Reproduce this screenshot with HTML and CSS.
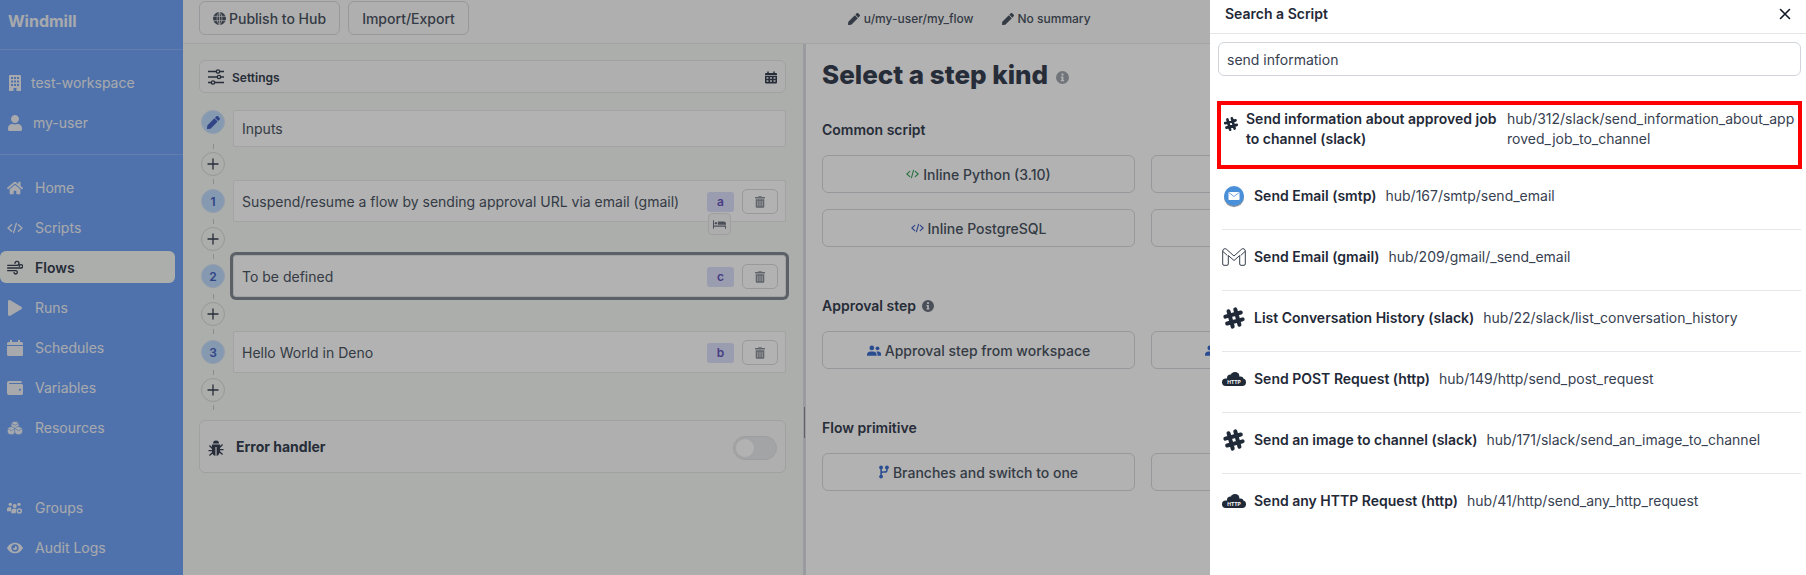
FILE: index.html
```html
<!DOCTYPE html>
<html lang="en">
<head>
    <meta charset="UTF-8">
    <meta name="viewport" content="width=device-width, initial-scale=1.0">
    <title>Windmill</title>
    <link rel="stylesheet" href="styles.css">
</head>
<body>
    <svg class="defs" width="0" height="0">
        <symbol id="i-pen" viewBox="0 0 512 512"><path d="M290.74 93.24l128.02 128.02-277.99 277.99-114.14 12.6C11.35 513.54-1.56 500.62.14 485.34l12.7-114.22 277.9-277.88zm207.2-19.06l-60.11-60.11c-18.75-18.75-49.16-18.75-67.91 0l-56.55 56.55 128.02 128.02 56.55-56.55c18.75-18.76 18.75-49.16 0-67.91z"/></symbol>
        <symbol id="i-user" viewBox="0 0 448 512"><path d="M224 256c70.7 0 128-57.3 128-128S294.7 0 224 0 96 57.3 96 128s57.3 128 128 128zm89.6 32h-16.7c-22.2 10.2-46.9 16-72.9 16s-50.6-5.8-72.9-16h-16.7C60.2 288 0 348.2 0 422.4V464c0 26.5 21.5 48 48 48h352c26.5 0 48-21.5 48-48v-41.6c0-74.2-60.2-134.4-134.4-134.4z"/></symbol>
        <symbol id="i-home" viewBox="0 0 576 512"><path d="M280.37 148.26L96 300.11V464a16 16 0 0 0 16 16l112.06-.29a16 16 0 0 0 15.92-16V368a16 16 0 0 1 16-16h64a16 16 0 0 1 16 16v95.64a16 16 0 0 0 16 16.05L464 480a16 16 0 0 0 16-16V300L295.67 148.26a12.19 12.19 0 0 0-15.3 0zM571.6 251.47L488 182.56V44.05a12 12 0 0 0-12-12h-56a12 12 0 0 0-12 12v72.61L318.47 43a48 48 0 0 0-61 0L4.34 251.47a12 12 0 0 0-1.6 16.9l25.5 31A12 12 0 0 0 45.15 301l235.22-193.74a12.19 12.19 0 0 1 15.3 0L530.9 301a12 12 0 0 0 16.9-1.6l25.5-31a12 12 0 0 0-1.7-16.93z"/></symbol>
        <symbol id="i-play" viewBox="0 0 448 512"><path d="M424.4 214.7L72.4 6.6C43.8-10.3 0 6.1 0 47.9V464c0 37.5 40.7 60.1 72.4 41.3l352-208c31.4-18.5 31.5-64.1 0-82.6z"/></symbol>
        <symbol id="i-wallet" viewBox="0 0 512 512"><path d="M461.2 128H80c-8.84 0-16-7.16-16-16s7.16-16 16-16h384c8.84 0 16-7.16 16-16 0-26.51-21.49-48-48-48H64C28.65 32 0 60.65 0 96v320c0 35.35 28.65 64 64 64h397.2c28.02 0 50.8-21.53 50.8-48V176c0-26.47-22.78-48-50.8-48zM416 340c-17.67 0-32-14.33-32-32s14.33-32 32-32 32 14.33 32 32-14.33 32-32 32z"/></symbol>
        <symbol id="i-trash" viewBox="0 0 448 512"><path d="M32 464a48 48 0 0 0 48 48h288a48 48 0 0 0 48-48V128H32zm272-256a16 16 0 0 1 32 0v224a16 16 0 0 1-32 0zm-96 0a16 16 0 0 1 32 0v224a16 16 0 0 1-32 0zm-96 0a16 16 0 0 1 32 0v224a16 16 0 0 1-32 0zM432 32H312l-9.4-18.7A24 24 0 0 0 281.1 0H166.8a23.72 23.72 0 0 0-21.4 13.3L136 32H16A16 16 0 0 0 0 48v32a16 16 0 0 0 16 16h416a16 16 0 0 0 16-16V48a16 16 0 0 0-16-16z"/></symbol>
        <symbol id="i-building" viewBox="0 0 12 16"><path fill-rule="evenodd" d="M0 1a1 1 0 0 1 1-1h10a1 1 0 0 1 1 1v15H7.5v-3h-3v3H0zM2 2v2h2V2zm3 0v2h2V2zm3 0v2h2V2zM2 5.500v2h2v-2zm3 0v2h2v-2zm3 0v2h2v-2zM2 9v2h2V9zm3 0v2h2V9zm3 0v2h2V9z"/></symbol>
        <symbol id="i-code" viewBox="0 0 24 18"><path d="M7 4L1.500 9 7 14M17 4l5.500 5-5.500 5M14 2l-4 14" fill="none" stroke="currentColor" stroke-width="2" stroke-linecap="round" stroke-linejoin="round"/></symbol>
        <symbol id="i-wind" viewBox="0 0 24 20"><path d="M1 6h14a3 3 0 1 0-3-3M1 10h20a2.500 2.500 0 1 0-2.500-2.500M1 14h12a2.500 2.500 0 1 1-2.500 2.500" fill="none" stroke="currentColor" stroke-width="2" stroke-linecap="round"/></symbol>
        <symbol id="i-calendar" viewBox="0 0 16 16"><path d="M3 0h2v2h6V0h2v2h1.500A1.500 1.500 0 0 1 16 3.500V5H0V3.500A1.500 1.500 0 0 1 1.500 2H3zM0 6h16v8.500a1.500 1.500 0 0 1-1.500 1.500h-13A1.500 1.500 0 0 1 0 14.500z"/></symbol>
        <symbol id="i-calendar-grid" viewBox="0 0 16 16"><path fill-rule="evenodd" d="M3 0h2v2h6V0h2v2h1.500A1.500 1.500 0 0 1 16 3.500V5H0V3.500A1.500 1.500 0 0 1 1.500 2H3zM0 6h16v8.500a1.500 1.500 0 0 1-1.500 1.500h-13A1.500 1.500 0 0 1 0 14.500zm2 1.500v2h2.500v-2zm4.700 0v2h2.500v-2zm4.700 0v2H14v-2zM2 11.500v2h2.500v-2zm4.700 0v2h2.500v-2zm4.700 0v2H14v-2z"/></symbol>
        <symbol id="i-cubes" viewBox="0 0 24 20"><g stroke="#71a4f7" stroke-width="1"><circle cx="12" cy="6" r="6"/><circle cx="6.500" cy="14" r="6"/><circle cx="17.500" cy="14" r="6"/><path d="M12 6L7.500 3.500M12 6l4.500-2.500M6.500 14L2 11.500M6.500 14l4.500-2.500M17.500 14L13 11.500M17.500 14l4.500-2.500" fill="none"/></g></symbol>
        <symbol id="i-group" viewBox="0 0 24 18"><circle cx="5" cy="3.500" r="2.500"/><circle cx="18" cy="3.500" r="2.500"/><circle cx="11.500" cy="6" r="3"/><path d="M0 11a3 3 0 0 1 3-3h3.500L6 14H0zM6.500 17v-3a4 4 0 0 1 4-4H14l-1 7z"/><circle cx="18.500" cy="13.500" r="3" fill="none" stroke="currentColor" stroke-width="2.200"/></symbol>
        <symbol id="i-eye" viewBox="0 0 24 16"><path fill-rule="evenodd" d="M12 0c5.500 0 9.800 3.500 12 8-2.200 4.500-6.500 8-12 8S2.200 12.500 0 8c2.200-4.500 6.500-8 12-8zm0 2.500a5.500 5.500 0 1 0 0 11 5.500 5.500 0 0 0 0-11zm0 2.500a3 3 0 1 1-3 3h3z"/></symbol>
        <symbol id="i-globe" viewBox="0 0 16 16"><circle cx="8" cy="8" r="8"/><path d="M0 5.300h16M0 10.700h16M8 0v16M8 0C5.800 2.500 5 5 5 8s.8 5.500 3 8M8 0c2.200 2.500 3 5 3 8s-.8 5.500-3 8" fill="none" stroke="#f4f4f4" stroke-width=".9"/></symbol>
        <symbol id="i-sliders" viewBox="0 0 16 16"><path d="M0 2.500h16M0 8h16M0 13.500h16" stroke="currentColor" stroke-width="1.300"/><circle cx="10" cy="2.500" r="1.700" fill="#f4f4f4" stroke="currentColor" stroke-width="1.300"/><circle cx="11" cy="8" r="1.700" fill="#f4f4f4" stroke="currentColor" stroke-width="1.300"/><circle cx="5" cy="13.500" r="1.700" fill="#f4f4f4" stroke="currentColor" stroke-width="1.300"/></symbol>
        <symbol id="i-info" viewBox="0 0 16 16"><path fill-rule="evenodd" d="M8 0a8 8 0 1 1 0 16A8 8 0 0 1 8 0zM6.800 3v2.400h2.400V3zM6 6.800V8.200h.9v3H6v1.400h4v-1.400h-.9V6.800z"/></symbol>
        <symbol id="i-bug" viewBox="0 0 16 16"><path d="M5 3.500a3 3 0 0 1 6 0zM4 4.500h8V6l2.200-2 .8 1-3 3v1h3.500v1.300H12v1l3 2.700-.8 1-2.700-2.300A4 4 0 0 1 8.600 16V7H7.400v9a4 4 0 0 1-2.900-2.300L1.800 16 1 15l3-2.700v-1H.5V10H4V9L1 6l.8-1L4 7z"/></symbol>
        <symbol id="i-bed" viewBox="0 0 20 13"><path d="M0 0h1.500v8H20v5h-1.500v-3h-17v3H0z"/><circle cx="4.500" cy="4.500" r="1.800"/><path d="M7.500 2h9A3.500 3.500 0 0 1 20 5.500V7H7.500z"/></symbol>
        <symbol id="i-plus" viewBox="0 0 12 12"><path d="M6 1v10M1 6h10" stroke="currentColor" stroke-width="1.300" stroke-linecap="round"/></symbol>
        <symbol id="i-users" viewBox="0 0 16 12"><circle cx="5.500" cy="3" r="2.700"/><circle cx="12" cy="3.500" r="2.200"/><path d="M0 11a4 4 0 0 1 4-4h3a4 4 0 0 1 4 4v1H0zM12 12V10.500A5 5 0 0 0 10.500 7H13a3 3 0 0 1 3 3v2z"/></symbol>
        <symbol id="i-branch" viewBox="0 0 12 16"><path d="M2.500 4v8M9.500 4v1.500A2.500 2.500 0 0 1 7 8H5a2.500 2.500 0 0 0-2.500 2.500" fill="none" stroke="currentColor" stroke-width="1.800"/><circle cx="2.500" cy="2.500" r="2.300"/><circle cx="9.500" cy="2.500" r="2.300"/><circle cx="2.500" cy="13.500" r="2.300"/></symbol>
        <symbol id="i-slack" viewBox="0 0 24 24"><g transform="rotate(-15 12 12)" fill="none" stroke="currentColor" stroke-width="4" stroke-linecap="round"><path d="M8.500 4v16M15.500 4v16M4 8.500h16M4 15.500h16"/></g></symbol>
        <symbol id="i-gmail" viewBox="0 0 24 18"><path d="M.7 3v13a1.300 1.300 0 0 0 1.300 1.300h3a1.300 1.300 0 0 0 1.300-1.300V7.500L12 12.500l5.700-5V16a1.300 1.300 0 0 0 1.300 1.300h3a1.300 1.300 0 0 0 1.300-1.300V3c0-2-2.200-3-3.700-1.800L12 8 4.400 1.200C2.900 0 .7 1 .7 3zM5.300 7.500L1 3.500M18.700 7.500L23 3.500" fill="none" stroke="currentColor" stroke-width=".9"/></symbol>
        <symbol id="i-mail" viewBox="0 0 24 24"><ellipse cx="12" cy="13.200" rx="10" ry="10" fill="#9a9a9a"/><circle cx="12" cy="12" r="10" fill="#4a90d9"/><rect x="6.500" y="8" width="11" height="8" rx=".8" fill="#fff"/><path d="M6.800 8.500L12 12.500l5.200-4" fill="none" stroke="#4a90d9" stroke-width=".8"/></symbol>
        <symbol id="i-cloud" viewBox="0 0 24 14"><circle cx="8.500" cy="6" r="3.500"/><circle cx="13" cy="4.500" r="4.500"/><circle cx="18.500" cy="7.500" r="3"/><rect y="6.500" width="24" height="7.500" rx="3.700"/></symbol>
    </svg>

    <div class="app">
        <aside class="sidebar">
            <div class="logo">Windmill</div>
            <div class="side-group account">
                <div class="side-item small"><svg class="ic-building"><use href="#i-building"/></svg>test-workspace</div>
                <div class="side-item small"><svg class="ic-side"><use href="#i-user"/></svg>my-user</div>
            </div>
            <nav class="nav">
                <a class="nav-item"><svg class="ic-nav"><use href="#i-home"/></svg>Home</a>
                <a class="nav-item"><svg class="ic-nav"><use href="#i-code"/></svg>Scripts</a>
                <a class="nav-item active"><svg class="ic-nav"><use href="#i-wind"/></svg>Flows</a>
                <a class="nav-item"><svg class="ic-nav"><use href="#i-play"/></svg>Runs</a>
                <a class="nav-item"><svg class="ic-nav"><use href="#i-calendar"/></svg>Schedules</a>
                <a class="nav-item"><svg class="ic-nav"><use href="#i-wallet"/></svg>Variables</a>
                <a class="nav-item"><svg class="ic-nav"><use href="#i-cubes"/></svg>Resources</a>
                <a class="nav-item nav-gap"><svg class="ic-nav"><use href="#i-group"/></svg>Groups</a>
                <a class="nav-item"><svg class="ic-nav"><use href="#i-eye"/></svg>Audit Logs</a>
            </nav>
        </aside>

        <main class="main">
            <header class="topbar">
                <button class="btn btn-publish"><svg class="ic-globe"><use href="#i-globe"/></svg>Publish to Hub</button>
                <button class="btn btn-import">Import/Export</button>
                <div class="flow-meta">
                    <span class="meta"><svg class="ic-pen"><use href="#i-pen"/></svg>u/my-user/my_flow</span>
                    <span class="meta"><svg class="ic-pen"><use href="#i-pen"/></svg>No summary</span>
                </div>
            </header>

            <div class="split">
                <section class="flow-panel">
                    <div class="card settings">
                        <svg class="ic-sliders"><use href="#i-sliders"/></svg>
                        <span class="settings-label">Settings</span>
                        <svg class="ic-cal"><use href="#i-calendar-grid"/></svg>
                    </div>

                    <div class="step step-inputs">
                        <span class="dot"><svg class="ic-dotpen"><use href="#i-pen"/></svg></span>
                        <div class="step-card">Inputs</div>
                    </div>
                    <div class="plus"><svg><use href="#i-plus"/></svg></div>

                    <div class="step">
                        <span class="dot">1</span>
                        <div class="step-card">
                            <span class="step-name">Suspend/resume a flow by sending approval URL via email (gmail)</span>
                            <span class="badge">a<span class="sleep"><svg><use href="#i-bed"/></svg></span></span>
                            <span class="del"><svg><use href="#i-trash"/></svg></span>
                        </div>
                    </div>
                    <div class="plus"><svg><use href="#i-plus"/></svg></div>

                    <div class="step">
                        <span class="dot">2</span>
                        <div class="step-card selected">
                            <span class="step-name">To be defined</span>
                            <span class="badge">c</span>
                            <span class="del"><svg><use href="#i-trash"/></svg></span>
                        </div>
                    </div>
                    <div class="plus plus-wide"><svg><use href="#i-plus"/></svg></div>

                    <div class="step">
                        <span class="dot">3</span>
                        <div class="step-card">
                            <span class="step-name">Hello World in Deno</span>
                            <span class="badge">b</span>
                            <span class="del"><svg><use href="#i-trash"/></svg></span>
                        </div>
                    </div>
                    <div class="plus"><svg><use href="#i-plus"/></svg></div>

                    <div class="card error-handler">
                        <svg class="ic-bug"><use href="#i-bug"/></svg>
                        <span class="error-label">Error handler</span>
                        <span class="toggle"></span>
                    </div>
                </section>

                <div class="divider"><span class="handle"></span></div>

                <section class="kind-panel">
                    <h1>Select a step kind <svg class="ic-info"><use href="#i-info"/></svg></h1>

                    <h2>Common script</h2>
                    <div class="kinds">
                        <button class="btn kind"><svg class="ic-code green"><use href="#i-code"/></svg>Inline Python (3.10)</button>
                        <button class="btn kind"></button>
                        <button class="btn kind"><svg class="ic-code blue"><use href="#i-code"/></svg>Inline PostgreSQL</button>
                        <button class="btn kind"></button>
                    </div>

                    <h2>Approval step <svg class="ic-info-sm"><use href="#i-info"/></svg></h2>
                    <div class="kinds">
                        <button class="btn kind"><svg class="ic-users"><use href="#i-users"/></svg>Approval step from workspace</button>
                        <button class="btn kind kind-start"><svg class="ic-users"><use href="#i-users"/></svg></button>
                    </div>

                    <h2>Flow primitive</h2>
                    <div class="kinds">
                        <button class="btn kind"><svg class="ic-branch"><use href="#i-branch"/></svg>Branches and switch to one</button>
                        <button class="btn kind"></button>
                    </div>
                </section>
            </div>
        </main>
    </div>

    <div class="overlay"></div>

    <div class="drawer">
        <div class="drawer-head">
            <span class="drawer-title">Search a Script</span>
            <svg class="ic-close" viewBox="0 0 12 12"><path d="M1.500 1.500l9 9M10.500 1.500l-9 9"/></svg>
        </div>
        <div class="drawer-search">
            <input class="search" type="text" value="send information">
        </div>
        <ul class="results">
            <li class="result picked">
                <svg class="ic-picked"><use href="#i-slack"/></svg>
                <span class="result-title">Send information about approved job to channel (slack)</span>
                <span class="result-path">hub/312/slack/send_information_about_approved_job_to_channel</span>
            </li>
            <li class="result">
                <svg class="ic-app"><use href="#i-mail"/></svg>
                <span class="result-title">Send Email (smtp)</span>
                <span class="result-path">hub/167/smtp/send_email</span>
            </li>
            <li class="result">
                <svg class="ic-app"><use href="#i-gmail"/></svg>
                <span class="result-title">Send Email (gmail)</span>
                <span class="result-path">hub/209/gmail/_send_email</span>
            </li>
            <li class="result">
                <svg class="ic-app"><use href="#i-slack"/></svg>
                <span class="result-title">List Conversation History (slack)</span>
                <span class="result-path">hub/22/slack/list_conversation_history</span>
            </li>
            <li class="result">
                <svg class="ic-app" viewBox="0 0 24 24"><use href="#i-cloud" y="5" width="24" height="14"/><text x="12" y="17" class="cloud-text">HTTP</text></svg>
                <span class="result-title">Send POST Request (http)</span>
                <span class="result-path">hub/149/http/send_post_request</span>
            </li>
            <li class="result">
                <svg class="ic-app"><use href="#i-slack"/></svg>
                <span class="result-title">Send an image to channel (slack)</span>
                <span class="result-path">hub/171/slack/send_an_image_to_channel</span>
            </li>
            <li class="result last">
                <svg class="ic-app" viewBox="0 0 24 24"><use href="#i-cloud" y="5" width="24" height="14"/><text x="12" y="17" class="cloud-text">HTTP</text></svg>
                <span class="result-title">Send any HTTP Request (http)</span>
                <span class="result-path">hub/41/http/send_any_http_request</span>
            </li>
        </ul>
    </div>
</body>
</html>
```

FILE: styles.css
```css
* {
    box-sizing: border-box;
}

html, body {
    height: 100%;
}

body {
    margin: 0;
    overflow: hidden;
    font-family: Inter, "Noto Sans", sans-serif;
    font-size: 14px;
    line-height: 20px;
    color: #374151;
    background-color: #fff;
}

svg {
    fill: currentColor;
    flex: none;
}

.defs {
    display: none;
}

.cloud-text {
    font-family: Inter, sans-serif;
    font-size: 5px;
    font-weight: 700;
    text-anchor: middle;
    fill: #fff;
}

.app {
    display: flex;
    height: 575px;
}

/* sidebar */
.sidebar {
    width: 183px;
    flex: none;
    background-color: #71a4f7;
    color: #f1f3f8;
}

.logo {
    height: 50px;
    padding: 11px 8px 0;
    font-size: 16px;
    font-weight: 700;
    border-bottom: 1px solid #8db5f8;
}

.account {
    padding: 17px 0 15px;
    display: flex;
    flex-direction: column;
    gap: 8px;
    border-bottom: 1px solid #8db5f8;
}

.side-item {
    display: flex;
    align-items: center;
    height: 32px;
    padding-left: 9px;
    gap: 10px;
}

.ic-building {
    width: 12px;
    height: 16px;
}

.ic-side {
    width: 14px;
    height: 16px;
    margin-left: -1px;
    margin-right: 1px;
}

.nav {
    padding-top: 16px;
    display: flex;
    flex-direction: column;
    gap: 8px;
}

.nav-item {
    display: flex;
    align-items: center;
    gap: 12px;
    height: 32px;
    width: 175px;
    padding: 2px 0 0 7px;
    border-radius: 6px;
}

.nav-item.active {
    background-color: #f6f9f6;
    color: #374151;
    font-weight: 600;
}

.nav-gap {
    margin-top: 40px;
}

.ic-nav {
    width: 16px;
    height: 16px;
}

/* top bar */
.main {
    flex: 1;
    min-width: 0;
    display: flex;
    flex-direction: column;
}

.topbar {
    height: 44px;
    flex: none;
    display: flex;
    align-items: flex-start;
    padding: 1px 0 0 16px;
    gap: 8px;
    background-color: #fbfbfb;
    border-bottom: 1px solid #ebebeb;
}

.btn {
    display: flex;
    align-items: center;
    justify-content: center;
    gap: 4px;
    height: 34px;
    padding: 0 13px;
    font-family: inherit;
    font-size: 14px;
    font-weight: 500;
    color: #4b5563;
    background-color: #fbfbfb;
    border: 1px solid #d8dade;
    border-radius: 6px;
}

.btn-publish {
    gap: 3px;
}

.ic-globe {
    width: 13px;
    height: 13px;
}

.flow-meta {
    display: flex;
    gap: 28px;
    margin-left: 371px;
    padding-top: 8px;
}

.meta {
    display: flex;
    align-items: center;
    gap: 4px;
    font-size: 12px;
    font-weight: 500;
    color: #4b5563;
}

.ic-pen {
    width: 12px;
    height: 12px;
}

.split {
    flex: 1;
    display: flex;
    min-height: 0;
}

/* flow steps */
.flow-panel {
    width: 620px;
    flex: none;
    padding: 16px 17px 0 16px;
    background-color: #f6f9f6;
}

.card {
    display: flex;
    align-items: center;
    background-color: #fbfbfb;
    border: 1px solid #e5e7e5;
    border-radius: 6px;
}

.settings {
    height: 33px;
    padding: 1px 8px 0;
    margin-bottom: 17px;
}

.ic-sliders {
    width: 16px;
    height: 16px;
}

.settings-label {
    margin: 1px 0 0 8px;
    font-size: 12px;
    font-weight: 600;
    flex: 1;
}

.ic-cal {
    width: 12px;
    height: 13px;
}

.step {
    display: flex;
    align-items: center;
    padding-left: 2px;
    gap: 8px;
}

.step-inputs {
    align-items: flex-start;
}

.dot {
    width: 24px;
    height: 24px;
    flex: none;
    display: flex;
    align-items: center;
    justify-content: center;
    padding-top: 1px;
    border-radius: 50%;
    font-size: 12px;
    font-weight: 600;
    color: #4763c0;
    background-color: #bfdbfe;
    border: 1px solid #d4e3f8;
}

.ic-dotpen {
    width: 13px;
    height: 13px;
}

.step-card {
    flex: 1;
    display: flex;
    align-items: center;
    height: 42px;
    padding: 1px 7px 0 8px;
    color: #4b5563;
    background-color: #fff;
    border: 1px solid #e8eae8;
    border-radius: 2px;
}

.step-inputs .step-card {
    height: 37px;
}

.step-card.selected {
    box-shadow: 0 0 0 3px #838b94;
    border-radius: 3px;
}

.step-name {
    flex: 1;
}

.badge {
    position: relative;
    width: 27px;
    height: 20px;
    margin-top: 1px;
    margin-right: 8px;
    display: flex;
    align-items: center;
    justify-content: center;
    font-size: 12px;
    font-weight: 600;
    color: #6a58bd;
    background-color: #dbe1fb;
    border-radius: 3px;
}

.sleep {
    position: absolute;
    top: 21px;
    left: 1px;
    width: 23px;
    height: 22px;
    display: flex;
    align-items: center;
    justify-content: center;
    color: #6b7280;
    background-color: #f6f8f6;
    border: 1px solid #e4e6e4;
    border-radius: 4px;
}

.sleep svg {
    width: 13px;
    height: 9px;
}

.del {
    width: 36px;
    height: 25px;
    display: flex;
    align-items: center;
    justify-content: center;
    color: #8b919b;
    border: 1px solid #d9dbdf;
    border-radius: 5px;
}

.del svg {
    width: 10px;
    height: 12px;
}

.plus {
    position: relative;
    width: 24px;
    height: 24px;
    margin: 5px 0 4px 2px;
    display: flex;
    align-items: center;
    justify-content: center;
    color: #374151;
    background-color: #f6f9f6;
    border: 1px solid #d8dad8;
    border-radius: 50%;
}

.plus-wide {
    margin-bottom: 5px;
}

.plus::before,
.plus::after {
    content: "";
    position: absolute;
    left: 11px;
    height: 5px;
    border-left: 1px solid #c8cac8;
}

.plus::before {
    top: -9px;
}

.plus::after {
    bottom: -9px;
}

.plus svg {
    width: 12px;
    height: 12px;
}

.error-handler {
    height: 53px;
    margin-top: 18px;
    padding: 3px 8px 0;
}

.ic-bug {
    width: 16px;
    height: 16px;
}

.error-label {
    flex: 1;
    margin: -2px 0 0 12px;
    font-weight: 700;
}

.toggle {
    position: relative;
    width: 44px;
    height: 24px;
    background-color: #eaebec;
    border: 1px solid #e2e3e5;
    border-radius: 12px;
}

.toggle::before {
    content: "";
    position: absolute;
    left: 2px;
    top: 2px;
    width: 18px;
    height: 18px;
    background-color: #fff;
    border-radius: 50%;
}

.divider {
    position: relative;
    width: 3px;
    flex: none;
    background-color: #dcdee2;
}

.handle {
    position: absolute;
    left: 1px;
    top: 363px;
    width: 1px;
    height: 31px;
    background-color: #888c92;
}

/* step kinds */
.kind-panel {
    flex: 1;
    padding: 15px 16px 0;
}

h1 {
    margin: 0 0 29px;
    font-size: 26px;
    line-height: 32px;
    font-weight: 800;
    letter-spacing: 0;
}

.ic-info {
    width: 13px;
    height: 13px;
    margin-left: 2px;
    color: #a3a8b0;
}

h2 {
    display: flex;
    align-items: center;
    gap: 6px;
    margin: 49px 0 15px;
    font-size: 14px;
    font-weight: 600;
    line-height: 20px;
}

h1 + h2 {
    margin-top: 0;
}

.ic-info-sm {
    width: 12px;
    height: 12px;
    color: #6b7280;
}

.kinds {
    display: grid;
    grid-template-columns: 313px 313px;
    gap: 16px;
}

.kind {
    height: 38px;
    padding: 0;
    background-color: transparent;
}

.kind-start {
    justify-content: flex-start;
    padding-left: 53px;
}

.ic-code {
    width: 13px;
    height: 10px;
}

.green {
    color: #3aa35c;
}

.blue {
    color: #3d5fc4;
}

.ic-users {
    width: 14px;
    height: 11px;
    color: #3d6fd1;
}

.ic-branch {
    width: 10px;
    height: 14px;
    color: #3d6fd1;
}

/* drawer */
.overlay {
    position: absolute;
    inset: 0;
    background-color: rgba(0, 0, 0, 0.3);
}

.drawer {
    position: absolute;
    top: 0;
    bottom: 0;
    right: 0;
    width: 596px;
    color: #1f2937;
    background-color: #fff;
}

.drawer-head {
    height: 34px;
    display: flex;
    align-items: center;
    justify-content: space-between;
    padding: 0 15px 6px 15px;
    border-bottom: 1px solid #e5e7eb;
}

.drawer-title {
    font-weight: 600;
}

.ic-close {
    width: 12px;
    height: 12px;
    fill: none;
    stroke: #111827;
    stroke-width: 1.6;
    stroke-linecap: round;
}

.drawer-search {
    padding: 8px 5px 0 8px;
}

.search {
    display: block;
    width: 100%;
    height: 34px;
    padding: 0 8px;
    font-family: inherit;
    font-size: 14px;
    color: #374151;
    border: 1px solid #d1d5db;
    border-radius: 6px;
    outline: none;
}

.results {
    list-style: none;
    margin: 25px 0 0;
    padding: 0 5px 0 12px;
}

.result {
    display: flex;
    align-items: center;
    gap: 8px;
    height: 61px;
    padding: 0 0 7px;
    border-bottom: 1px solid #e5e7eb;
}

.result.last {
    border-bottom: none;
}

.result-title {
    font-weight: 600;
    margin-right: 1px;
}

.result-path {
    color: #374151;
}

.ic-app {
    width: 24px;
    height: 24px;
    margin-left: 0;
}

.picked {
    margin: 0 0 0 -5px;
    width: 585px;
    height: 68px;
    align-items: flex-start;
    padding: 4px 2px 0 2px;
    gap: 0;
    border: 4px solid #ff0000;
}

.ic-picked {
    width: 16px;
    height: 16px;
    margin-top: 7px;
    margin-right: 7px;
}

.picked .result-title {
    width: 260px;
    flex: none;
}

.picked .result-path {
    flex: 1;
    word-break: break-all;
}
```
